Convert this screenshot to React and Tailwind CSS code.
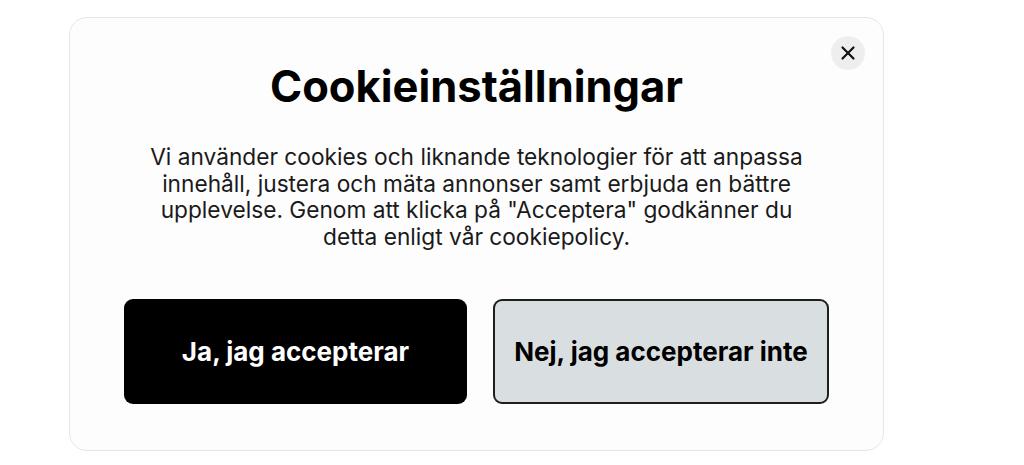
import React from 'react';

const App = () => {
  return (
    <div className="w-[1024px] h-[465px] bg-white pt-[17px] pl-[69px]" style={{ fontFamily: 'Inter, "Liberation Sans", sans-serif' }}>
      <div className="relative w-[815px] h-[434px] rounded-[18px] border border-[#e6e6e6] bg-[#fdfdfd] flex flex-col items-center pt-[44px]">
        <button className="absolute top-[18px] right-[18px] w-[34px] h-[34px] rounded-full bg-[#eeeeee] flex items-center justify-center">
          <svg width="16" height="16" viewBox="0 0 16 16" fill="none" stroke="#111" strokeWidth="2.2" strokeLinecap="round">
            <path d="M2.5 2.5 L13.5 13.5 M13.5 2.5 L2.5 13.5" />
          </svg>
        </button>
        <h1 className="text-[43.5px] leading-[48px] font-bold text-black">
          Cookieinställningar
        </h1>
        <p className="mt-[34px] w-[670px] text-center text-[22.7px] leading-[26.7px] text-[#1a1a1a]">
          Vi använder cookies och liknande teknologier för att anpassa innehåll, justera och mäta annonser samt erbjuda en bättre upplevelse. Genom att klicka på "Acceptera" godkänner du detta enligt vår cookiepolicy.
        </p>
        <div className="mt-[48px] flex gap-[26px]">
          <button className="w-[343px] h-[105px] rounded-[9px] bg-black text-white text-[26px] font-bold">
            Ja, jag accepterar
          </button>
          <button className="w-[336px] h-[105px] rounded-[9px] bg-[#d9dfe1] border-2 border-[#1e1e1e] text-black text-[26px] font-bold">
            Nej, jag accepterar inte
          </button>
        </div>
      </div>
    </div>
  );
};

export default App;
